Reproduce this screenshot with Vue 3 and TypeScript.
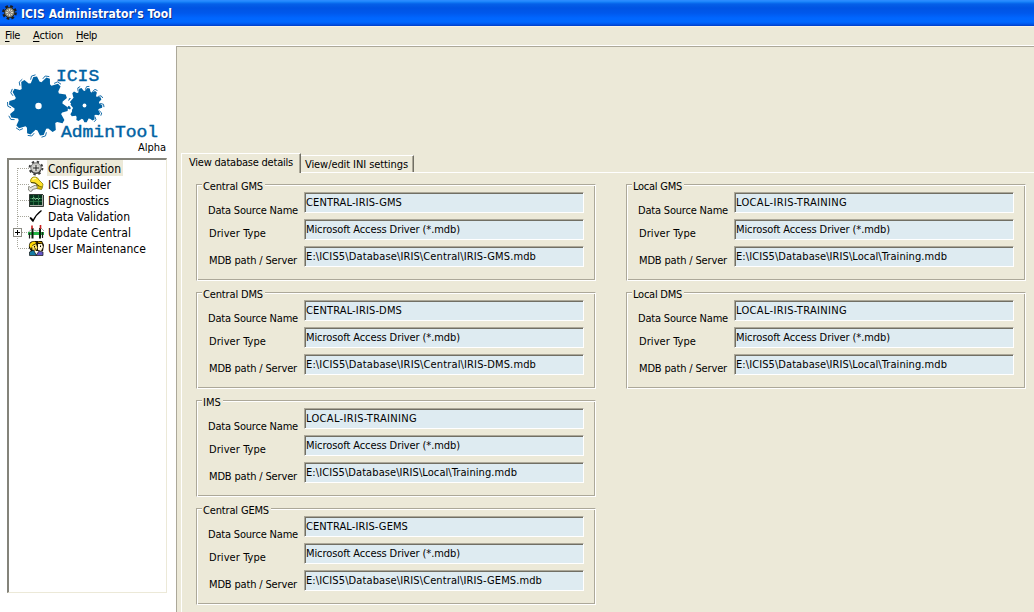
<script setup lang="ts">
type Fit = { value: number }

// Spreads or tightens the letters of a label until it fills the given width.
const vFit = {
  mounted(el: HTMLElement, binding: Fit) {
    const count = (el.textContent ?? '').length
    const natural = el.getBoundingClientRect().width
    el.style.letterSpacing = `${(binding.value - natural) / count}px`
  },
}

interface Source {
  title: string
  titleWidth: number
  name: string
  nameWidth: number
  path: string
  pathWidth: number
}

const driver = 'Microsoft Access Driver (*.mdb)'

const columns: Source[][] = [
  [
    { title: 'Central GMS', titleWidth: 60, name: 'CENTRAL-IRIS-GMS', nameWidth: 96, path: 'E:\\ICIS5\\Database\\IRIS\\Central\\IRIS-GMS.mdb', pathWidth: 230 },
    { title: 'Central DMS', titleWidth: 60, name: 'CENTRAL-IRIS-DMS', nameWidth: 96, path: 'E:\\ICIS5\\Database\\IRIS\\Central\\IRIS-DMS.mdb', pathWidth: 230 },
    { title: 'IMS', titleWidth: 18, name: 'LOCAL-IRIS-TRAINING', nameWidth: 111, path: 'E:\\ICIS5\\Database\\IRIS\\Local\\Training.mdb', pathWidth: 211 },
    { title: 'Central GEMS', titleWidth: 66, name: 'CENTRAL-IRIS-GEMS', nameWidth: 102, path: 'E:\\ICIS5\\Database\\IRIS\\Central\\IRIS-GEMS.mdb', pathWidth: 236 },
  ],
  [
    { title: 'Local GMS', titleWidth: 49, name: 'LOCAL-IRIS-TRAINING', nameWidth: 111, path: 'E:\\ICIS5\\Database\\IRIS\\Local\\Training.mdb', pathWidth: 211 },
    { title: 'Local DMS', titleWidth: 49, name: 'LOCAL-IRIS-TRAINING', nameWidth: 111, path: 'E:\\ICIS5\\Database\\IRIS\\Local\\Training.mdb', pathWidth: 211 },
  ],
]

const menu = [
  { key: 'F', rest: 'ile', width: 15 },
  { key: 'A', rest: 'ction', width: 30 },
  { key: 'H', rest: 'elp', width: 21 },
]

const tree = [
  { label: 'Configuration', width: 73, icon: 'gear' },
  { label: 'ICIS Builder', width: 63, icon: 'helmet' },
  { label: 'Diagnostics', width: 61, icon: 'monitor' },
  { label: 'Data Validation', width: 82, icon: 'check' },
  { label: 'Update Central', width: 83, icon: 'bridge' },
  { label: 'User Maintenance', width: 98, icon: 'users' },
]

function polar(cx: number, cy: number, r: number, a: number): string {
  return `${(cx + r * Math.cos(a)).toFixed(1)} ${(cy + r * Math.sin(a)).toFixed(1)}`
}

function gear(cx: number, cy: number, outer: number, inner: number, teeth: number, phase: number): string {
  const step = (Math.PI * 2) / teeth
  const profile: [number, number][] = [[-0.5, inner], [-0.16, outer], [0.12, outer], [0.32, inner + 0.6]]
  const points: string[] = []
  for (let i = 0; i < teeth; i++) {
    for (const [offset, r] of profile) points.push(polar(cx, cy, r, (i + offset) * step + phase))
  }
  return `M${points.join('L')}Z`
}

// Thin hooks that run round the tip of each tooth.
function hooks(cx: number, cy: number, outer: number, teeth: number, phase: number, from: number, to: number): string {
  const step = (Math.PI * 2) / teeth
  let d = ''
  for (let i = from; i < to; i++) {
    const at = (offset: number, r: number) => polar(cx, cy, r, (i + offset) * step + phase)
    d += `M${at(-0.42, outer - 2)}L${at(-0.28, outer + 1.2)}L${at(0.02, outer + 1.8)}`
  }
  return d
}

const bigGear = gear(38.5, 61, 29.5, 24, 14, 0.12)
const bigHooks = hooks(38.5, 61, 29.5, 14, 0.12, 3, 13)
const smallGear = gear(85, 60, 17.3, 14, 13, 0.1)
const smallHooks = hooks(85, 60, 17.3, 13, 0.1, -4, 3)
</script>

<template>
  <div class="window">
    <header class="titlebar">
      <svg width="16" height="16" viewBox="0 0 16 16">
        <circle cx="7.5" cy="7.5" r="6" fill="none" stroke="#1b1b1b" stroke-width="2.8" stroke-dasharray="2.6 2.1" />
        <circle cx="7.5" cy="7.5" r="5" fill="#8f8f84" stroke="#26261f" />
        <path d="M7.5 4v7M4 7.5h7M5 5l5 5M10 5l-5 5" stroke="#e2decc" stroke-width=".9" />
        <circle cx="7.5" cy="7.5" r="1.5" fill="#8a7f7a" />
      </svg>
      <span v-fit="151" class="caption">ICIS Administrator's Tool</span>
    </header>
    <nav class="menubar">
      <span v-for="m in menu" :key="m.key" v-fit="m.width"><u>{{ m.key }}</u>{{ m.rest }}</span>
    </nav>
    <div class="body">
      <aside class="side">
        <div class="brand">
          <svg class="logo" width="175" height="113" viewBox="0 0 175 113">
            <path :d="bigHooks + smallHooks" fill="none" stroke="#1a6fab" stroke-width="1" />
            <path :d="smallGear" fill="#0062a3" />
            <path :d="bigGear" fill="#0062a3" />
            <path d="M73 52l-5 6 4 5-3 5" fill="none" stroke="#fff" stroke-width="1.8" />
            <circle cx="38.5" cy="61" r="3.2" fill="#fff" />
            <circle cx="84.5" cy="60.5" r="1.9" fill="#fff" />
            <g class="wordmark" transform="scale(1.125 1)">
              <text x="49.8" y="36">ICIS</text>
              <text x="54.2" y="92">AdminTool</text>
            </g>
          </svg>
          <span v-fit="28" class="alpha">Alpha</span>
        </div>
        <ul class="tree">
          <li v-for="(t, i) in tree" :key="t.label">
            <svg class="branch" width="20" height="16" viewBox="0 0 20 16" shape-rendering="crispEdges">
              <path :d="i === tree.length - 1 ? 'M8.5 0v8' : i === 0 ? 'M8.5 8v8' : 'M8.5 0v16'" class="dots" />
              <path d="M9 8.5h11" class="dots" />
              <template v-if="i === 4">
                <rect x="4.5" y="4.5" width="8" height="8" fill="#fff" stroke="#8c8c84" />
                <path d="M6 8.5h5M8.5 6v5" stroke="#000" />
              </template>
            </svg>
            <svg class="icon" width="16" height="16" viewBox="0 0 16 16">
              <template v-if="t.icon === 'gear'">
                <circle cx="8" cy="8" r="6.3" fill="none" stroke="#3a3a3a" stroke-width="2.2" stroke-dasharray="2.3 2.65" />
                <circle cx="8" cy="8" r="5.2" fill="#c6c6c2" stroke="#777" />
                <path d="M3.2 10a5 5 0 0 0 9.4 0" fill="none" stroke="#444" stroke-width="1.3" />
                <circle cx="8" cy="8" r="2.8" fill="#dededa" />
                <path d="M8 5v6M5 8h6" stroke="#222" />
              </template>
              <template v-else-if="t.icon === 'helmet'">
                <path d="M2.5 5Q3 .8 7 1q3 .3 4 3l4 4-.5 3-4-1-3-3-4.500-.5Z" fill="#ffe22a" stroke="#8b7d00" stroke-width=".8" />
                <path d="M4.500 3.500q1.500-1.500 3.500-1" fill="none" stroke="#fffbb0" stroke-width="1.200" />
                <path d="M3 6.500l4 .5 4 3" fill="none" stroke="#4d4500" />
                <path d="M8 9l6.500 2.500-1 2-5-1Z" fill="#e4c400" stroke="#6f6200" stroke-width=".7" />
                <path d="M0 11q1.500-1 2.500.5l5-2.500 2 2-1 1.500-4 1q0 2-2 2Q0 15 0 11Z" fill="#e2e2da" stroke="#6f6f66" stroke-width=".8" />
              </template>
              <template v-else-if="t.icon === 'monitor'">
                <rect x="1" y="2" width="14" height="12" fill="#a8aaa4" />
                <path d="M1.5 14V2.5H15M1 14.5h14.5V3" fill="none" stroke="#343a36" />
                <rect x="2" y="3" width="12" height="10" fill="#05331c" />
                <path d="M2 6.5h12M2 9.5h12M5.5 3v10M10.500 3v10" stroke="#2a7546" stroke-width=".8" />
                <path d="M4 7l2-1.500 1.500 2L9 6l1.500 1.500L12 6" fill="none" stroke="#a5dfae" stroke-width=".8" />
              </template>
              <template v-else-if="t.icon === 'check'">
                <path d="M2 9.5L5 13Q8 6.500 13.500 2.500" fill="none" stroke="#000" stroke-width="1.300" />
                <path d="M2.800 10l2.400 3" stroke="#000" stroke-width="2" />
              </template>
              <template v-else-if="t.icon === 'bridge'">
                <path d="M0 9.500h16" stroke="#22b545" stroke-width="3" />
                <path d="M4.500 4v10.500M12 4v10.500" stroke="#0a1a0a" stroke-width="2" />
                <path d="M1.500 9v5.500M14.500 8v6" stroke="#222" stroke-width="1.200" />
                <path d="M4 1.500V5M12.500 1v4" stroke="#c81e1e" stroke-width="1.600" />
                <path d="M4 5L0 8.500M5 5q3.500 4 7 0M13 4l3 3" fill="none" stroke="#666" stroke-width=".6" />
              </template>
              <template v-else>
                <path d="M1 8Q0 1 6 1h8l2 4-1 6H3Z" fill="#171100" />
                <path d="M1.500 6q0-4 5-4.500l2 1.500-4 2-1.500 4Z" fill="#ffd900" />
                <path d="M4 6l4-2 1.500 4-2 3-3-1Z" fill="#ffe45c" />
                <path d="M10 4h4l1 3-2 4-3-1Z" fill="#fff6d8" />
                <path d="M6.500 6v1.500M12.500 5.500V7M6.500 9h1.500" stroke="#000" />
                <path d="M1.500 15.500V12l4-2 3 5.500Z" fill="#147ca4" stroke="#111" stroke-width=".7" />
                <path d="M8 15.500l3-4.500 4 1v3.500Z" fill="#6557c8" stroke="#111" stroke-width=".7" />
                <path d="M10 2l4 1" stroke="#e8b400" />
              </template>
            </svg>
            <span class="node" :class="{ selected: i === 0 }"><span v-fit="t.width">{{ t.label }}</span></span>
          </li>
        </ul>
      </aside>
      <main class="content">
        <div class="tabs">
          <div class="tab active"><span v-fit="104">View database details</span></div>
          <div class="tab"><span v-fit="103">View/edit INI settings</span></div>
        </div>
        <div class="page">
          <div v-for="(column, c) in columns" :key="c" class="column">
            <section v-for="s in column" :key="s.title" class="group">
              <h2><span v-fit="s.titleWidth">{{ s.title }}</span></h2>
              <div class="row">
                <label><span v-fit="90">Data Source Name</span></label>
                <div class="field"><span v-fit="s.nameWidth">{{ s.name }}</span></div>
              </div>
              <div class="row type">
                <label><span v-fit="57">Driver Type</span></label>
                <div class="field"><span v-fit="154">{{ driver }}</span></div>
              </div>
              <div class="row path">
                <label><span v-fit="88">MDB path / Server</span></label>
                <div class="field"><span v-fit="s.pathWidth">{{ s.path }}</span></div>
              </div>
            </section>
          </div>
        </div>
      </main>
    </div>
  </div>
</template>

<style>
body {
  margin: 0;
  overflow: hidden;
}
</style>

<style scoped>
.window {
  width: 1034px;
  height: 612px;
  overflow: hidden;
  display: flex;
  flex-direction: column;
  background: #ece9d8;
  color: #000;
  font: 11px/14px "DejaVu Sans Condensed", "DejaVu Sans", sans-serif;
  white-space: nowrap;
}
.titlebar {
  height: 26px;
  flex: none;
  box-sizing: border-box;
  display: flex;
  align-items: center;
  gap: 3px;
  padding: 0 0 1px 2px;
  background: linear-gradient(#2a8cff 0, #2a8cff 1px, #1480f8 2px, #0560e8 4px, #0054e3 8px, #0058ec 13px, #0066ff 18px, #0068ff 22px, #0058ee 24px, #003dc5 26px);
}
.caption {
  color: #fff;
  font-size: 12px;
  font-weight: bold;
  text-shadow: 1px 1px #0b2f8a;
  padding-top: 2px;
}
.menubar {
  height: 19px;
  flex: none;
  box-sizing: border-box;
  display: flex;
  gap: 13px;
  padding: 2px 5px 0;
  border-top: 1px solid #f6f3e8;
}
.menubar u {
  text-underline-offset: 2px;
}
.body {
  flex: 1;
  display: flex;
  min-height: 0;
}
.side {
  width: 176px;
  flex: none;
  background: #fff;
}
.brand {
  height: 113px;
  display: grid;
}
.brand > * {
  grid-area: 1 / 1;
}
.wordmark {
  font: 16px "Liberation Mono", monospace;
  fill: #0062a3;
  stroke: #0062a3;
  stroke-width: 0.4px;
}
.alpha {
  align-self: end;
  justify-self: start;
  margin: 0 0 3px 138px;
}
.tree {
  list-style: none;
  width: 160px;
  height: 435px;
  box-sizing: border-box;
  margin: 0 0 0 7px;
  padding: 0;
  border: 1px solid #ece9d8;
  border-top: 2px solid #84837a;
  border-left: 2px solid #84837a;
  font-size: 12px;
}
.tree li {
  display: flex;
  height: 16px;
}
.branch {
  margin-right: -1px;
}
.icon {
  flex: none;
}
.dots {
  fill: none;
  stroke: #a7a69b;
  stroke-dasharray: 1 1;
}
.node {
  height: 15px;
  line-height: 16px;
  margin-left: 3px;
  padding: 1px 2px 0 1px;
}
.selected {
  background: #ece9d8;
}
.content {
  flex: 1;
  display: flex;
  flex-direction: column;
  border-left: 1px solid #aca899;
  border-top: 1px solid #aca899;
  box-shadow: 0 -1px #fff;
  margin-top: 1px;
  padding: 106px 0 0 4px;
}
.tabs {
  display: flex;
  align-items: flex-end;
  height: 19px;
  flex: none;
}
.tab {
  box-sizing: border-box;
  height: 17px;
  width: 113px;
  padding: 2px 0 0 4px;
  border-top: 1px solid #fff;
  border-right: 1px solid #716f64;
  box-shadow: inset -1px 0 #aca899;
}
.tab.active {
  width: 120px;
  height: 20px;
  margin-bottom: -1px;
  padding: 2px 0 0 7px;
  border-left: 1px solid #fff;
  background: #ece9d8;
  z-index: 1;
}
.page {
  flex: 1;
  display: flex;
  gap: 30px;
  padding: 11px 0 0 14px;
  border-left: 1px solid #fff;
  border-top: 1px solid #fff;
}
.column {
  width: 400px;
  flex: none;
  display: flex;
  flex-direction: column;
  gap: 11px;
}
.group {
  height: 97px;
  flex: none;
  box-sizing: border-box;
  border: 1px solid #aca899;
  border-right-color: #fff;
  border-bottom-color: #fff;
  box-shadow: inset 1px 1px #fff, inset -1px -1px #aca899;
}
.group h2 {
  font: inherit;
  width: max-content;
  height: 14px;
  margin: -5px 0 -2px 5px;
  padding: 0 2px 0 1px;
  background: #ece9d8;
}
.row {
  display: flex;
  align-items: flex-start;
  height: 21px;
  margin-bottom: 6px;
}
.row label {
  width: 96px;
  padding: 12px 0 0 11px;
}
.type label,
.path label {
  width: 95px;
  padding: 8px 0 0 12px;
}
.field {
  box-sizing: border-box;
  width: 280px;
  height: 21px;
  padding: 3px 0 0 1px;
  background: #deebf1;
  border: 1px solid #aca899;
  border-right-color: #fff;
  border-bottom-color: #fff;
  box-shadow: inset 1px 1px #716f64;
}
</style>
